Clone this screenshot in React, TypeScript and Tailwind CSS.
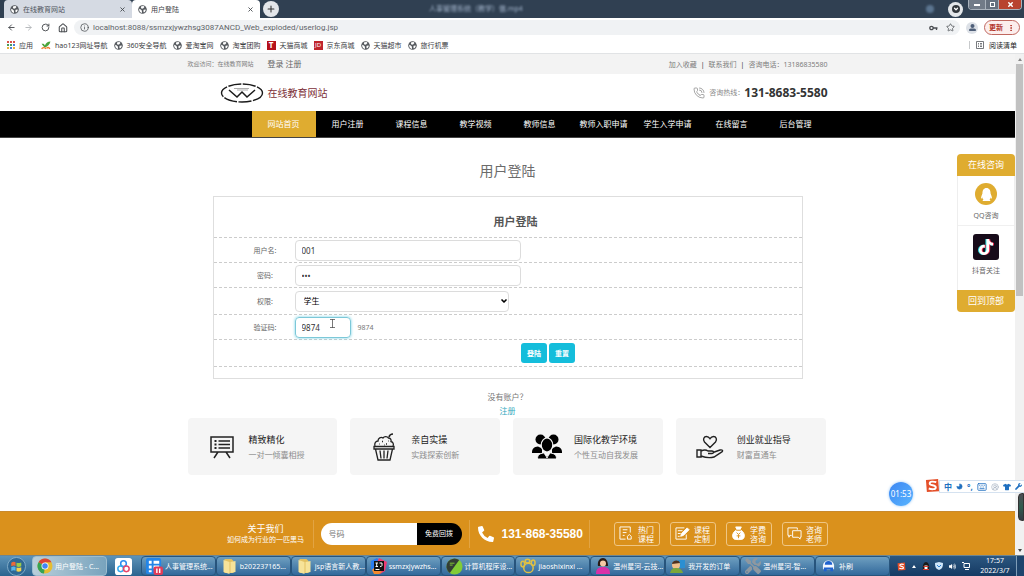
import type { ReactNode } from "react";
import {
  ArrowLeft,
  ArrowRight,
  ChevronDown,
  CircleUserRound,
  Home,
  Info,
  Keyboard,
  Moon,
  MoreVertical,
  PhoneCall,
  Plus,
  RotateCw,
  Star,
  X,
} from "lucide-react";
import { FaPhoneAlt, FaQq, FaTiktok, FaTools, FaTshirt, FaUserAlt, FaVolumeUp, FaWrench } from "react-icons/fa";

const bookmarks = [
  { label: "hao123网址导航", icon: "hao" },
  { label: "360安全导航", icon: "globe" },
  { label: "爱淘宝网", icon: "globe" },
  { label: "淘宝团购", icon: "globe" },
  { label: "天猫商城", icon: "tmall" },
  { label: "京东商城", icon: "jd" },
  { label: "天猫超市", icon: "globe" },
  { label: "旅行机票", icon: "globe" },
];

const navItems = [
  "网站首页",
  "用户注册",
  "课程信息",
  "教学视频",
  "教师信息",
  "教师入职申请",
  "学生入学申请",
  "在线留言",
  "后台管理",
];

function Globe() {
  return (
    <svg viewBox="0 0 16 16" className="size-[9px] shrink-0" aria-hidden>
      <circle cx="8" cy="8" r="7.6" fill="#55595e" />
      <path d="M2 6.5 5 8l2 2v4C4 13.6 1.8 11 2 6.5ZM6 2.2l4-.4 1.500 1.600L9 6 6.500 6.500 5 4ZM10 8.500l3.800-.5c0 2.500-1.300 4.400-3.300 5.400L9.500 11Z" fill="#fff" />
    </svg>
  );
}

function BookmarkIcon({ kind }: { kind: string }) {
  if (kind === "tmall") {
    return <span className="grid size-[9px] place-items-center bg-[#b5121b] text-[8px] font-bold text-white">T</span>;
  }
  if (kind === "jd") {
    return <span className="grid size-[9px] place-items-center bg-[#c0252c] text-[6px] text-white">JD</span>;
  }
  if (kind === "hao") {
    return (
      <svg viewBox="0 0 18 16" className="h-[9px] w-[10px] shrink-0" aria-hidden>
        <path d="M1 5c3-1 5 0 6 3 2-4 5-7 10-7-1 5-5 9-10 11C5 10 3 8 1 5Z" fill="#4aa43a" />
        <path d="M1 14c3-3 6-3 8 0M10 13c2-2 4-2 6 1" stroke="#ee7d2b" strokeWidth="2.500" fill="none" />
      </svg>
    );
  }
  return <Globe />;
}

function Tab({ title, active }: { title: string; active?: boolean }) {
  return (
    <div
      className={
        active
          ? "flex w-32 items-center gap-1 rounded-t bg-white px-[6px] text-[7px] text-[#3c4043]"
          : "flex w-32 items-center gap-1 rounded-t bg-[#d5dae3] px-[6px] text-[7px] text-[#50565e]"
      }
    >
      <Globe />
      <span className="flex-1 truncate">{title}</span>
      <button aria-label="关闭标签页">
        <X className="size-[7px] text-[#44484d]" strokeWidth={3} />
      </button>
    </div>
  );
}

function Browser() {
  return (
    <header className="shrink-0">
      <div className="flex h-[18px] items-stretch bg-[#304052] pl-1">
        <Tab title="在线教育网站" />
        <Tab title="用户登陆" active />
        <button aria-label="新标签页" className="ml-[3px] grid size-4 place-items-center self-center rounded-full bg-[#e3e6ea]">
          <Plus className="size-[10px] text-[#333]" strokeWidth={2.5} />
        </button>
        <p className="ml-[150px] self-center text-[7px] leading-4 whitespace-nowrap text-[#a3b4cb] blur-[1px]">
          人事管理系统（教学）做.mp4
        </p>
        <div className="ml-auto flex items-center gap-[14px]">
          <span className="size-2 rounded-full bg-[#5c7590] blur-[1px]" />
          <button aria-label="搜索标签页" className="grid size-[15px] place-items-center rounded-full bg-[#e4e7ea]">
            <span className="grid size-2 place-items-center rounded-full bg-[#33383d]">
              <ChevronDown className="size-[6px] text-white" strokeWidth={5} />
            </span>
          </button>
        </div>
        <div className="mr-[2px] ml-[5px] flex h-[10px] w-[54px] overflow-hidden rounded-b-sm border border-t-0 border-[#a9b2bc] text-white">
          <button aria-label="最小化" className="flex w-4 items-center justify-center bg-[#717b88]">
            <span className="h-[2px] w-[6px] bg-white" />
          </button>
          <button aria-label="还原" className="flex w-[14px] items-center justify-center border-x border-[#a9b2bc] bg-[#66717f]">
            <span className="size-[5px] border border-white" />
          </button>
          <button aria-label="关闭" className="flex flex-1 items-center justify-center bg-[#b8432f]">
            <X className="size-[7px]" strokeWidth={5} />
          </button>
        </div>
      </div>

      <div className="flex h-[19px] items-center bg-white pr-1 pl-[7px] text-[#4a4d51]">
        <div className="flex w-[67px] items-center gap-2">
          <button aria-label="后退"><ArrowLeft className="size-[9px]" strokeWidth={2.5} /></button>
          <button aria-label="前进"><ArrowRight className="size-[9px] text-[#b3b6ba]" strokeWidth={2.5} /></button>
          <button aria-label="刷新"><RotateCw className="size-[9px]" strokeWidth={2.5} /></button>
          <button aria-label="主页"><Home className="size-[10px]" strokeWidth={2.5} /></button>
        </div>
        <label className="flex h-[15px] flex-1 items-center gap-1 rounded-full bg-[#f0f2f4] pr-[5px] pl-[6px]">
          <Info className="size-[9px] shrink-0" strokeWidth={2} />
          <input
            aria-label="地址"
            className="min-w-0 flex-1 bg-transparent font-[Roboto] text-[8px] text-[#5f6368] outline-none"
            defaultValue="localhost:8088/ssmzxjywzhsg3087ANCD_Web_exploded/userlog.jsp"
          />
          <svg viewBox="0 0 9 6" className="h-[6px] w-[9px]" fill="none" stroke="#4a4d51" strokeWidth="1.300" aria-hidden>
            <circle cx="2.500" cy="3" r="1.700" />
            <path d="M4 3h4.500M7.500 3v2" />
          </svg>
          <Star className="ml-1 size-[9px]" strokeWidth={2} />
        </label>
        <button aria-label="用户" className="mx-[6px] grid size-3 place-items-center rounded-full bg-[#dde1e7]">
          <FaUserAlt className="size-[7px] text-[#4f5f78]" />
        </button>
        <button className="flex h-[15px] w-9 items-center justify-center rounded-full border border-[#c0675f] bg-[#fceeed] text-[7px] font-bold text-[#b3372c]">
          更新
          <MoreVertical className="ml-1 size-2" strokeWidth={3} />
        </button>
      </div>

      <nav className="flex h-[17px] items-center gap-[6px] border-b border-[#e1e3e5] bg-white px-[7px] text-[7px] whitespace-nowrap text-[#3d4043]">
        <a href="#apps" className="mr-[2px] flex items-center gap-1">
          <svg viewBox="0 0 8 8" className="size-2" aria-hidden>
            <path d="M0 0h2v2H0zM3 0h2v2H3zM6 0h2v2H6z" fill="#d9534a" />
            <path d="M0 3h2v2H0zM3 3h2v2H3z" fill="#4d9b58" />
            <path d="M6 3h2v2H6zM3 6h2v2H3z" fill="#4b83d8" />
            <path d="M0 6h2v2H0zM6 6h2v2H6z" fill="#e8b23a" />
          </svg>
          应用
        </a>
        {bookmarks.map((b) => (
          <a key={b.label} href="#bookmark" className="flex items-center gap-1">
            <BookmarkIcon kind={b.icon} />
            {b.label}
          </a>
        ))}
        <a href="#reading" className="ml-auto flex items-center gap-[5px] border-l border-[#c8cacc] pl-[6px] text-[#222]">
          <svg viewBox="0 0 8 8" className="size-2" fill="none" stroke="#55595e" aria-hidden>
            <path d="M.5.5h7v7h-7zM2 2.500h1M4 2.500h2M2 4h1M4 4h2M2 5.500h1M4 5.500h2" strokeWidth=".8" />
          </svg>
          阅读清单
        </a>
      </nav>
    </header>
  );
}

function SiteHeader() {
  return (
    <>
      <div className="bg-[#f3f3f3]">
        <div className="mx-auto flex h-5 max-w-[640px] items-center text-[7px] text-[#7d7d7d]">
          <span className="text-[6px]">欢迎访问：在线教育网站</span>
          <div className="ml-[14px] flex gap-[2px] text-[8px] text-[#666]">
            <a href="#login">登录</a>
            <a href="#register">注册</a>
          </div>
          <div className="ml-auto flex items-center gap-1">
            <a href="#fav">加入收藏</a>
            <span className="text-[#333]">|</span>
            <a href="#contact">联系我们</a>
            <span className="text-[#333]">|</span>
            <span>咨询电话：13186835580</span>
          </div>
        </div>
      </div>
      <div className="mx-auto flex h-[37px] w-full max-w-[640px] items-center pl-8">
        <svg viewBox="0 0 44 20" className="h-5 w-11" fill="none" stroke="#1a1a1a" aria-hidden>
          <ellipse cx="22" cy="10" rx="20.500" ry="9" strokeWidth="1.400" strokeDasharray="13 1.500" />
          <path d="M9 7l8 7 5-5 5 5 8-7" strokeWidth="1.500" />
          <path d="M14 5.500h15M17 7h11" stroke="#999" strokeWidth=".8" />
        </svg>
        <span className="ml-1 text-[10px] text-[#7c3038]">在线教育网站</span>
        <div className="ml-auto flex items-center text-[7px] text-[#888]">
          <PhoneCall className="mr-1 size-3" strokeWidth={1.5} />
          咨询热线：
          <strong className="text-[12px] text-[#333]">131-8683-5580</strong>
        </div>
      </div>
      <nav className="border-b border-[#444] bg-black">
        <ul className="mx-auto flex h-[26px] max-w-[640px] justify-end text-[8px] text-white">
          {navItems.map((item, i) => (
            <li key={item} className="w-16">
              <a
                href="#nav"
                className={i === 0 ? "flex h-full items-center justify-center bg-[#dfac30]" : "flex h-full items-center justify-center"}
              >
                {item}
              </a>
            </li>
          ))}
        </ul>
      </nav>
    </>
  );
}

function Row({ id, label, tall, children }: { id: string; label: string; tall?: boolean; children: ReactNode }) {
  return (
    <div className={`flex items-center border-b border-dashed border-[#ccc] ${tall ? "h-[27px]" : "h-[25px]"}`}>
      <label htmlFor={id} className="ml-[22px] w-[59px] text-center text-[7px] text-[#666]">
        {label}:
      </label>
      {children}
    </div>
  );
}

function LoginForm() {
  const field = "h-[21px] rounded border border-[#dcdcdc] bg-white px-[6px] text-[8px] text-[#333] outline-none";
  return (
    <section className="px-4">
      <h1 className="mt-[23px] text-center text-[14px] leading-5 text-[#6b6b6b]">用户登陆</h1>
      <form className="mx-auto mt-[15px] max-w-[590px] border border-[#dedede]" onSubmit={(e) => e.preventDefault()}>
        <h2 className="flex h-[41px] items-center justify-center border-b border-dashed border-[#ccc] pt-2 pl-4 text-[11px] font-bold text-[#555]">
          用户登陆
        </h2>
        <Row id="user" label="用户名">
          <input id="user" className={`${field} w-[226px]`} defaultValue="001" />
        </Row>
        <Row id="pwd" label="密码">
          <input id="pwd" type="password" className={`${field} w-[226px]`} defaultValue="001" />
        </Row>
        <Row id="role" label="权限" tall>
          <div className="relative">
            <select id="role" className={`${field} w-[214px] appearance-none pl-2 text-black`}>
              <option>学生</option>
            </select>
            <ChevronDown className="pointer-events-none absolute top-[7px] right-[1px] size-[8px] text-black" strokeWidth={5} />
          </div>
        </Row>
        <Row id="code" label="验证码">
          <div className="relative">
            <input
              id="code"
              className="h-[21px] w-14 rounded border border-[#7cc8d8] px-[6px] text-[8px] text-[#333] shadow-[0_0_3px_#6fd0e4] outline-none"
              defaultValue="9874"
            />
            <svg viewBox="0 0 5 9" className="absolute top-[2px] left-[35px] h-[9px] w-[5px]" fill="none" stroke="#555" aria-hidden>
              <path d="M0 .5h5M2.500 0v9M0 8.500h5" strokeWidth=".8" />
            </svg>
          </div>
          <span className="ml-[7px] text-[7px] text-[#777]">9874</span>
        </Row>
        <div className="flex h-[27px] items-center justify-center gap-[2px] border-b border-dashed border-[#ccc] pl-[81px] text-[7px] font-bold text-white">
          <button type="submit" className="h-5 w-[26px] rounded-[3px] bg-[#14bddb]">登陆</button>
          <button type="reset" className="h-5 w-[26px] rounded-[3px] bg-[#14bddb]">重置</button>
        </div>
        <div className="h-[11px]" />
      </form>
      <div className="mt-[11px] text-center text-[8px] leading-[14px] text-[#777]">
        <p>没有账户？</p>
        <a href="#register" className="block text-[#35a9c0]">注册</a>
      </div>
    </section>
  );
}

function BoardIcon() {
  return (
    <svg viewBox="0 0 24 24" className="h-6 w-[30px]" fill="none" stroke="#222" strokeWidth="1.500" aria-hidden>
      <path d="M1 2h22v15H1zM8.500 6H20M8.500 9.500H20M8.500 13H20M8 17l-4 6M16 17l4 6" />
      <path d="M4.500 6h2M4.500 9.500h2M4.500 13h2" strokeWidth="2" />
    </svg>
  );
}

function CupcakeIcon() {
  return (
    <svg viewBox="0 0 22 28" className="h-[28px] w-[30px]" fill="none" stroke="#222" strokeWidth="1.300" aria-hidden>
      <path d="M1 13.500h20v2.500H1zM2.500 16 5 27h12l2.500-11M7 17.500l1 8M11 17.500v8M15 17.500l-1 8" />
      <path d="M2 13c-1-3 1-5 3-5 0-3 3-4.500 5-3 1-1.500 4-2 5.500 0 2 0 3 2 2.500 3.500 2 .5 3 2.500 2 4.500" />
      <path d="M16 4c.5-2 2-3 4-3M6 11h.5M9 8.500h1M13 11h1M11 12h.5M15 8h.5" strokeWidth="1.600" />
    </svg>
  );
}

function TeamIcon() {
  return (
    <svg viewBox="0 0 30 25" className="h-[25px] w-[30px]" aria-hidden>
      <circle cx="8.500" cy="5.500" r="5" fill="#000" />
      <circle cx="21.500" cy="5.500" r="5" fill="#000" />
      <path d="M0 18.500c0-4 2-5.500 6-6l4 2v4.500H0ZM30 18.500c0-4-2-5.500-6-6l-4 2v4.500h10Z" fill="#000" />
      <ellipse cx="15" cy="11" rx="5.800" ry="7" fill="#000" stroke="#f5f5f5" strokeWidth="1.200" />
      <path d="M5.500 25c0-4 2-5.500 6-6l3.500 3 3.500-3c4 .5 6 2 6 6Z" fill="#000" stroke="#f5f5f5" />
      <path d="m13 20 2 4 2-4" stroke="#fff" fill="none" />
    </svg>
  );
}

function HandHeartIcon() {
  return (
    <svg viewBox="0 0 28 24" className="h-6 w-[30px]" fill="none" stroke="#222" strokeWidth="1.400" aria-hidden>
      <path d="M14 12.500 8.500 7C6.500 4.500 8 1.500 10.500 1.500c1.700 0 2.700 1 3.500 2.200.8-1.200 1.800-2.200 3.500-2.200 2.500 0 4 3 2 5.500Z" />
      <path d="M1 15h4v7H1zM5 16c3-1.500 5-1.500 7 0h4c2 0 2 2.500 0 2.500h-4M17 17.500l7-2.500c2.500-.6 3.500 1 1.500 2.200L18 22c-4 1.200-9 .5-13-1" />
    </svg>
  );
}

const features = [
  { title: "精致精化", text: "一对一倾囊相授", icon: <BoardIcon /> },
  { title: "亲自实操", text: "实践探索创新", icon: <CupcakeIcon /> },
  { title: "国际化教学环境", text: "个性互动自我发展", icon: <TeamIcon /> },
  { title: "创业就业指导", text: "财富直通车", icon: <HandHeartIcon /> },
];

function Features() {
  return (
    <ul className="mx-auto grid w-full max-w-[640px] grid-cols-4 gap-[13px] pr-[2px]">
      {features.map((f) => (
        <li key={f.title} className="flex h-[57px] items-center gap-3 rounded bg-[#f5f5f5] pl-[19px]">
          {f.icon}
          <div className="whitespace-nowrap">
            <h3 className="text-[9px] leading-[15px] text-[#222]">{f.title}</h3>
            <p className="text-[8px] leading-[15px] text-[#8c8c8c]">{f.text}</p>
          </div>
        </li>
      ))}
    </ul>
  );
}

const quickLinks = [
  {
    lines: ["热门", "课程"],
    icon: <path d="M7 14H1V1h11v6M4 4h5M4 7h4M4 10h2M9 14v-3l2-2 2 2v3z" />,
  },
  {
    lines: ["课程", "定制"],
    icon: (
      <>
        <path d="M12 9v5H1V2h9M3 5h5M3 8h3M3 11h2" />
        <path d="m6 11 1-3 6-6 2 2-6 6z" fill="#fff" />
      </>
    ),
  },
  {
    lines: ["学费", "咨询"],
    icon: (
      <>
        <path d="M5 1h6L9.500 4C13 5.500 15 9 14 12c-.6 2-2 2.500-6 2.500S2.600 14 2 12C1 9 3 5.500 6.500 4Z" fill="#fff" />
        <path d="M5.500 4.500h5M6 7l2 2 2-2M8 9v4M6 10.500h4" stroke="#da911c" />
      </>
    ),
  },
  {
    lines: ["咨询", "老师"],
    icon: <path d="M5 10H3l-1 2v-2H1V2h10v2M6 5h9v7h-1v2l-2-2H6z" />,
  },
];

function ContactBar() {
  return (
    <footer className="mt-auto border-t border-[#c98a2c] bg-[#da911c] text-white">
      <div className="mx-auto flex h-[43px] max-w-[640px] items-center">
        <div className="w-[125px] pl-[31px] text-center whitespace-nowrap">
          <h3 className="text-[9px] leading-[11px]">关于我们</h3>
          <p className="text-[7px] leading-[11px]">如何成为行业的一匹黑马</p>
        </div>
        <form className="flex h-[28px] items-center border-r border-l border-[#e2a443] px-[7px]" onSubmit={(e) => e.preventDefault()}>
          <input
            aria-label="号码"
            placeholder="号码"
            className="h-[22px] w-[96px] rounded-l-full bg-white px-2 text-[8px] text-[#555] outline-none placeholder:text-[#777]"
          />
          <button className="h-[22px] w-[45px] rounded-r-full bg-black text-[7px] text-white">免费回拨</button>
        </form>
        <a href="#tel" className="flex h-[28px] w-[120px] items-center gap-2 border-r border-[#e2a443] pl-2 font-[Liberation_Sans] text-[12px] font-bold">
          <FaPhoneAlt className="size-4 shrink-0" />
          131-868-35580
        </a>
        <div className="ml-auto flex gap-[10px]">
          {quickLinks.map((q) => (
            <a
              key={q.lines.join("")}
              href="#quick"
              className="flex h-6 w-[46px] items-center justify-center gap-1 rounded-[3px] border border-[#efc684] text-[8px] leading-[9px]"
            >
              <svg viewBox="0 0 16 16" className="size-[15px] shrink-0" fill="none" stroke="#fff" aria-hidden>
                {q.icon}
              </svg>
              <span className="w-4">
                {q.lines[0]}
                <br />
                {q.lines[1]}
              </span>
            </a>
          ))}
        </div>
      </div>
    </footer>
  );
}

function SideWidget() {
  return (
    <aside className="absolute top-[100px] right-[9px] w-[58px] overflow-hidden rounded text-center text-[7px] text-[#666]">
      <h3 className="bg-[#dfac30] text-[9px] leading-[22px] text-white">在线咨询</h3>
      <div className="border-x border-[#eee] bg-white">
        <a href="#qq" className="flex h-[50px] flex-col items-center gap-[5px] border-b border-[#f0f0f0] pt-[7px] leading-3">
          <span className="grid size-[22px] shrink-0 place-items-center rounded-full bg-[#dfac30]">
            <FaQq className="size-[13px] text-white" />
          </span>
          QQ咨询
        </a>
        <a href="#douyin" className="flex h-16 flex-col items-center gap-[5px] pt-2 leading-3">
          <span className="grid size-[26px] shrink-0 place-items-center rounded-[3px] bg-[#170b1a]">
            <FaTiktok className="size-4 text-white [filter:drop-shadow(1px_0_0_#ef2950)_drop-shadow(-1px_0_0_#35dfe0)]" />
          </span>
          抖音关注
        </a>
      </div>
      <button className="block w-full bg-[#dfac30] text-[9px] leading-[22px] text-white">回到顶部</button>
    </aside>
  );
}

function ScrollBar() {
  return (
    <div className="flex w-[9px] shrink-0 flex-col items-center bg-[#f1f1f1]">
      <span className="grid h-[10px] place-items-center">
        <svg viewBox="0 0 4 3" className="h-[3px] w-1" aria-hidden><path d="M0 3h4L2 0z" fill="#888" /></svg>
      </span>
      <span className="h-[232px] w-[7px] bg-[#c1c1c1]" />
      <span className="mt-auto grid h-[10px] place-items-center">
        <svg viewBox="0 0 4 3" className="h-[3px] w-1" aria-hidden><path d="M0 0h4L2 3z" fill="#444" /></svg>
      </span>
    </div>
  );
}

function SogouMark({ className }: { className: string }) {
  return (
    <svg viewBox="0 0 16 16" className={className} aria-hidden>
      <path d="m1 2 13-1 1 13-13 1Z" fill="#e4502a" />
      <path d="M12 4.500C9 3.500 5 3.500 5 5.800 5 8.500 11.500 7 11.500 10c0 2.400-4.500 2.300-7.500 1.200" fill="none" stroke="#fff" strokeWidth="2" />
    </svg>
  );
}

function Overlays() {
  return (
    <>
      <div className="absolute right-[111px] bottom-[70px] grid size-6 place-items-center rounded-full bg-gradient-to-br from-[#3f86f2] to-[#58b5ff] text-[8px] text-white shadow-[0_0_3px_#9cc8f5]">
        01:53
      </div>
      <div className="absolute right-0 bottom-[83px] flex h-[13px] w-[85px] items-center justify-between border border-r-0 border-[#d5e2f0] bg-white pr-[2px] pl-1 text-[#2070c0]">
        <span className="text-[8px] font-bold">中</span>
        <Moon className="size-[7px] -scale-x-100" fill="currentColor" />
        <span className="text-[8px] font-bold">°,</span>
        <Keyboard className="size-[10px]" />
        <CircleUserRound className="size-2 text-[#a8b4c2]" />
        <FaTshirt className="size-2" />
        <FaWrench className="size-[7px]" />
      </div>
      <SogouMark className="absolute right-[84px] bottom-[83px] size-[15px]" />
      <div className="absolute right-0 bottom-[55px] h-7 w-[6px] rounded-l-sm border border-[#333] bg-gradient-to-b from-[#4d4d55] via-[#2f5b4d] to-[#333a44]" />
    </>
  );
}

function Folder() {
  return (
    <svg viewBox="0 0 14 16" className="h-4 w-[17px] shrink-0" aria-hidden>
      <path d="M2 1h7l2 2v12H2z" fill="#e3c162" />
      <path d="M1 2l6 2v12l-6-2zM8 4l5-1v11l-5 1z" fill="#f7e399" />
    </svg>
  );
}

const tasks: { label: string; icon: ReactNode; lit?: boolean }[] = [
  {
    label: "用户登陆 - C...",
    lit: true,
    icon: (
      <svg viewBox="0 0 32 32" className="size-4 shrink-0" aria-hidden>
        <circle cx="16" cy="16" r="15" fill="#e5bd32" />
        <path d="M16 16 3 8.500A15 15 0 0 1 29 8.500H16Z" fill="#dc4437" />
        <path d="M16 16 14 31A15 15 0 0 1 3 8.500Z" fill="#35a353" />
        <circle cx="16" cy="16" r="7" fill="#fff" />
        <circle cx="16" cy="16" r="5.500" fill="#4286f5" />
      </svg>
    ),
  },
  {
    label: "",
    icon: (
      <svg viewBox="0 0 18 18" className="size-[17px] shrink-0" aria-hidden>
        <rect width="18" height="18" rx="3" fill="#fff" />
        <g fill="none" strokeWidth="1.600">
          <circle cx="9" cy="6" r="3" stroke="#2d8cf0" />
          <circle cx="6" cy="11.500" r="3" stroke="#35a9ee" />
          <circle cx="12" cy="11.500" r="3" stroke="#e8456b" />
        </g>
      </svg>
    ),
  },
  {
    label: "人事管理系统...",
    icon: (
      <svg viewBox="0 0 18 18" className="size-[17px] shrink-0" aria-hidden>
        <rect width="16" height="17" rx="2" fill="#2385e8" />
        <path d="M3 3h3v3H3zM3 8h3v3H3zM3 13h3v2H3zM8 3h6v3H8zM8 8h6v3H8z" fill="#fff" />
        <rect x="8" y="9" width="10" height="9" rx="2" fill="#e23c58" />
        <path d="M11.500 11v5M14.500 11v5" stroke="#fff" strokeWidth="1.500" />
      </svg>
    ),
  },
  { label: "b202237165...", icon: <Folder /> },
  { label: "jsp语言新人教...", icon: <Folder /> },
  {
    label: "ssmzxjywzhs...",
    icon: (
      <svg viewBox="0 0 16 16" className="size-4 shrink-0" aria-hidden>
        <path d="M0 3 6 0l3 3-6 12-3-4Z" fill="#2a7df0" />
        <path d="m8 0 8 4-2 9-5 3-7-3Z" fill="#ee3a73" />
        <path d="m1 12 3-3 7 5-3 2H3Z" fill="#f58a2c" />
        <path d="M3 3h10v10H3z" fill="#111" />
        <path d="M4.500 5h2.500M5.700 5v3.500M4.500 8.500h2.500M8.500 5h2.500v2.500q0 1-2 1M4.500 11.500h4" stroke="#fff" fill="none" />
      </svg>
    ),
  },
  {
    label: "计算机程序设...",
    icon: (
      <svg viewBox="0 0 18 18" className="size-[17px] shrink-0" aria-hidden>
        <circle cx="9" cy="9" r="8.500" fill="#82cc36" />
        <path d="M14 2.200A8.500 8.500 0 1 0 4 16Z" fill="#333d35" />
        <path d="M4 5.500h5M4 7.500h3" stroke="#82cc36" />
      </svg>
    ),
  },
  {
    label: "jiaoshixinxi ...",
    icon: (
      <svg viewBox="0 0 17 16" className="size-4 shrink-0" fill="none" stroke="#e1c142" strokeWidth="1.600" aria-hidden>
        <circle cx="9" cy="10" r="5" />
        <ellipse cx="3" cy="6" rx="2" ry="3" />
        <ellipse cx="8" cy="2.800" rx="2.500" ry="2" />
        <ellipse cx="14" cy="4.500" rx="2" ry="3" />
      </svg>
    ),
  },
  {
    label: "温州星河-云技...",
    icon: (
      <svg viewBox="0 0 16 16" className="size-4 shrink-0" aria-hidden>
        <path d="M3 8C2 3 5 0 8 0s5 3 5 8Z" fill="#2a1a14" />
        <circle cx="8" cy="5.500" r="3" fill="#f5c9a5" />
        <path d="M1 16c0-5 2-7 7-7s7 2 7 7Z" fill="#d930a8" />
      </svg>
    ),
  },
  {
    label: "我开发的订单",
    icon: (
      <svg viewBox="0 0 16 16" className="size-4 shrink-0" aria-hidden>
        <path d="M8 2h7v8H8z" fill="#2b8fd2" />
        <circle cx="6" cy="7" r="4" fill="#f0bf8b" />
        <path d="M2 6c0-4 7-5 8-1Z" fill="#4c3020" />
        <path d="M0 15c1-4 3-5 6-5s6 1 7 5Z" fill="#7ba73a" />
      </svg>
    ),
  },
  { label: "温州星河-智...", icon: <FaTools className="size-4 shrink-0 text-[#8f98a0]" /> },
  {
    label: "补刷",
    icon: (
      <svg viewBox="0 0 14 14" className="mx-[2px] size-[13px] shrink-0" aria-hidden>
        <path d="M1 6a6 5.500 0 0 1 12 0v4H1Z" fill="#f2f7ff" />
        <path d="M3 5a4 4 0 0 1 8 0ZM2 8h10v4H9V10H5v2H2Z" fill="#1f62cf" />
      </svg>
    ),
  },
];

function Taskbar() {
  return (
    <div className="flex h-[21px] shrink-0 items-stretch border-t border-[#6d8591] bg-gradient-to-b from-[#5d93b8] to-[#2b648f] text-[7px] whitespace-nowrap text-white">
      <button aria-label="开始" className="grid w-8 shrink-0 place-items-center">
        <svg viewBox="0 0 20 20" className="size-[19px]" aria-hidden>
          <circle cx="10" cy="10" r="9.500" fill="#2f6894" stroke="#94bcd4" strokeWidth=".8" />
          <path d="M4.500 6q2.500-1.500 4.500-.5v4q-2-1-4.500.3Z" fill="#ec6b38" />
          <path d="M10 6q2.500 1 5-.3v4q-2.500 1.300-5 .3Z" fill="#9bcb4a" />
          <path d="M4.500 10.800q2.500-1.300 4.500-.3v4q-2-1-4.500.3Z" fill="#58b6ea" />
          <path d="M10 11q2.500 1 5-.3v4q-2.500 1.300-5 .3Z" fill="#f8d34b" />
        </svg>
      </button>
      {tasks.map((t) => (
        <button
          key={t.label}
          aria-label={t.label || "网盘"}
          className={
            t.label === ""
              ? "flex w-[34px] shrink-0 items-center justify-center"
              : t.lit
                ? "flex min-w-0 flex-1 items-center gap-[2px] rounded-sm border border-[#9dbdcf] bg-gradient-to-r from-[#b9cfda] to-[#78a3bd] pl-1"
                : "flex min-w-0 flex-1 items-center gap-[2px] rounded-sm border border-[#27547c] bg-gradient-to-b from-[#6e9fc0] to-[#32699b] pl-1"
          }
        >
          {t.icon}
          {t.label}
        </button>
      ))}
      <div className="flex w-[134px] shrink-0 items-center bg-gradient-to-b from-[#2c5780] to-[#153a63] pl-[7px]">
        <div className="flex w-[73px] items-center justify-between">
          <SogouMark className="size-[9px]" />
          <svg viewBox="0 0 4 3" className="h-[3px] w-1" aria-hidden><path d="M0 3h4L2 0z" fill="#fff" /></svg>
          <svg viewBox="0 0 8 8" className="size-2" aria-hidden>
            <path d="M1 8C0 3 2 0 4 0s4 3 3 8Z" fill="#1a1a1a" />
            <path d="M2.500 3.500h3V7h-3z" fill="#fff" />
            <path d="M1.500 4h5v1h-5zM1 7h6v1H1z" fill="#e0392c" />
          </svg>
          <svg viewBox="0 0 8 8" className="size-2" aria-hidden><path d="M0 1 4 0l4 1c0 4-1 6-4 7C1 7 0 5 0 1Z" fill="#cfe6fa" /><path d="m2 3 2 2 2-2" stroke="#2a7fd4" fill="none" /></svg>
          <FaVolumeUp className="size-[7px]" />
          <svg viewBox="0 0 8 8" className="size-2" fill="none" stroke="#fff" aria-hidden><path d="M2 1.500h5.500v4H2zM0 .5h2M3 7.500h4" /></svg>
        </div>
        <div className="flex-1 pl-1 text-center leading-[10px]">
          17:57
          <br />
          2022/3/7
        </div>
        <button aria-label="显示桌面" className="h-full w-2 border-l border-[#7e9db8] bg-[#1d446d]" />
      </div>
    </div>
  );
}

export default function App() {
  return (
    <div className="relative flex h-screen flex-col overflow-hidden bg-white font-['Noto_Sans','Noto_Sans_CJK_SC',sans-serif] leading-none">
      <Browser />
      <div className="relative flex min-h-0 flex-1">
        <main className="flex min-w-0 flex-1 flex-col">
          <SiteHeader />
          <LoginForm />
          <Features />
          <ContactBar />
        </main>
        <ScrollBar />
        <SideWidget />
      </div>
      <Taskbar />
      <Overlays />
    </div>
  );
}
